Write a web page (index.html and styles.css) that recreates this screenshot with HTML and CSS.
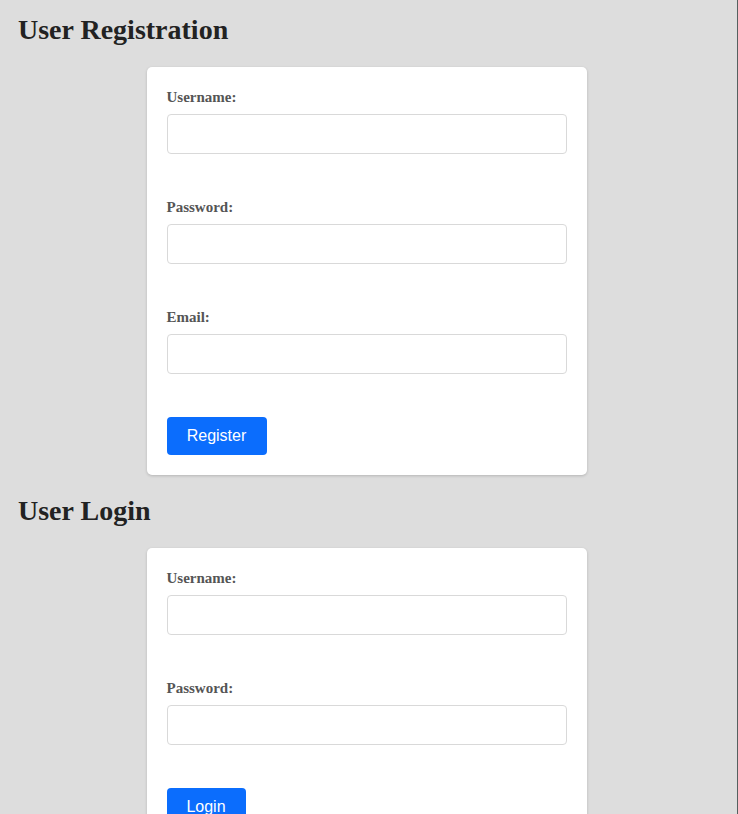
FILE: index.html
```html
<!DOCTYPE html>
<html lang="en">
<head>
<meta charset="utf-8">
<title>User Registration</title>
<link rel="stylesheet" href="styles.css">
</head>
<body>
  <h1 class="title title-first">User Registration</h1>
  <form class="card">
    <div class="field">
      <label class="label" for="r-user">Username:</label>
      <input class="input" id="r-user" type="text">
    </div>
    <div class="field">
      <label class="label" for="r-pass">Password:</label>
      <input class="input" id="r-pass" type="password">
    </div>
    <div class="field">
      <label class="label" for="r-mail">Email:</label>
      <input class="input" id="r-mail" type="email">
    </div>
    <button class="btn" type="button">Register</button>
  </form>

  <h1 class="title">User Login</h1>
  <form class="card">
    <div class="field">
      <label class="label" for="l-user">Username:</label>
      <input class="input" id="l-user" type="text">
    </div>
    <div class="field">
      <label class="label" for="l-pass">Password:</label>
      <input class="input" id="l-pass" type="password">
    </div>
    <button class="btn btn-login" type="button">Login</button>
  </form>
</body>
</html>
```
FILE: styles.css
```css
html {
  background: #dddddd;
  border-right: 1px solid #55605f;
}

body {
  margin: 0;
  padding: 0 22px 0 18px;
  font-family: "Liberation Serif", "Times New Roman", serif;
  color: #222222;
}

.title {
  font-size: 28px;
  font-weight: bold;
  line-height: 32px;
  margin: 20px 0 21px;
  color: #222222;
}

.title-first {
  margin-top: 14px;
}

.card {
  width: 400px;
  margin: 0 auto;
  padding: 20px;
  background: #ffffff;
  border-radius: 5px;
  box-shadow: 0 1px 3px rgba(0, 0, 0, 0.18);
}

.field {
  margin-bottom: 43px;
}

.label {
  display: block;
  font-size: 15px;
  font-weight: bold;
  line-height: 20px;
  color: #555555;
  margin-bottom: 7px;
}

.input {
  display: block;
  box-sizing: border-box;
  width: 100%;
  height: 40px;
  margin: 0;
  padding: 8px 10px;
  border: 1px solid #d9d9d9;
  border-radius: 4px;
  background: #ffffff;
  font-family: "Liberation Sans", Arial, sans-serif;
  font-size: 15px;
}

.btn {
  display: block;
  box-sizing: border-box;
  width: 100px;
  height: 38px;
  padding: 0;
  border: none;
  border-radius: 4px;
  background: #0b6dfd;
  color: #ffffff;
  font-family: "Liberation Sans", Arial, sans-serif;
  font-size: 16px;
}

.btn-login {
  width: 79px;
}
```
